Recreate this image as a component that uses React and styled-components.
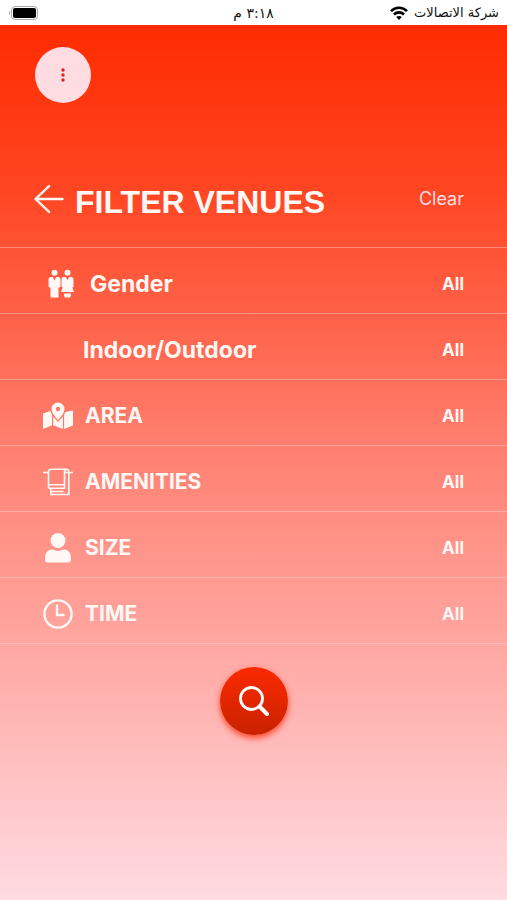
import React from "react";
import styled, { createGlobalStyle } from "styled-components";

const GlobalStyle = createGlobalStyle`
  * {
    box-sizing: border-box;
  }
  body {
    margin: 0;
    background: #ffdbe2;
  }
`

const Page = styled.div`
  min-height: 100vh;
  display: flex;
  flex-direction: column;
  font-family: Inter, "Open Sans", sans-serif;
  color: #fff8f5;
`

const StatusBar = styled.div`
  display: grid;
  grid-template-columns: 1fr auto 1fr;
  align-items: center;
  height: 25px;
  padding: 0 8px;
  background: white;
  color: #111;
  font-family: "DejaVu Sans", sans-serif;
  font-size: 13px;
  line-height: 24px;
`

const Carrier = styled.div`
  display: flex;
  align-items: center;
  gap: 6px;
`

const Time = styled.span`
  font-size: 14px;
`

const Battery = styled.svg`
  justify-self: end;
`

const Content = styled.main`
  flex: 1;
  display: flex;
  flex-direction: column;
  background: linear-gradient(#ff2b00, #ff4420 18%, #ff7f6f 48%, #ffdbe2);
`

const TopBar = styled.div`
  padding: 22px 35px 0;
`

const MenuButton = styled.button`
  display: flex;
  align-items: center;
  justify-content: center;
  width: 56px;
  height: 56px;
  padding: 0;
  border: none;
  border-radius: 50%;
  background: #ffdbe2;
  cursor: pointer;
`

const Header = styled.header`
  display: flex;
  align-items: center;
  height: 145px;
  padding: 54px 43px 0 34px;
  border-bottom: 1px solid rgba(255, 219, 226, 0.4);
`

const BackButton = styled.button`
  display: flex;
  padding: 0 0 6px;
  margin-right: 11px;
  border: none;
  background: none;
  color: inherit;
  cursor: pointer;
`

const Title = styled.h1`
  flex: 1;
  margin: 0;
  font-family: "Liberation Sans", Arial, sans-serif;
  font-size: 32px;
  font-weight: 700;
  line-height: 40px;
`

const ClearButton = styled.button`
  padding: 0 0 8px;
  border: none;
  background: none;
  color: #ffdbe2;
  font-family: inherit;
  font-size: 18px;
  cursor: pointer;
`

const FilterList = styled.ul`
  margin: 0;
  padding: 0;
  list-style: none;
`

const FilterItem = styled.li`
  border-bottom: 1px solid rgba(255, 219, 226, 0.4);
`

const FilterButton = styled.button`
  display: flex;
  align-items: center;
  width: 100%;
  height: 65px;
  padding: 7px 43px 0;
  border: none;
  background: none;
  color: inherit;
  font-family: inherit;
  font-weight: 700;
  text-align: left;
  cursor: pointer;
`

const IconSlot = styled.span`
  display: flex;
  justify-content: center;
  width: ${({ $wide }) => ($wide ? "35px" : "30px")};
`

const FilterName = styled.span`
  flex: 1;
  font-size: ${({ $large }) => ($large ? "23px" : "21px")};
  line-height: 30px;
  padding-left: ${({ $gap }) => $gap}px;
`

const FilterValue = styled.span`
  font-size: 17px;
  line-height: 30px;
`

const SearchButton = styled.button`
  display: flex;
  align-items: center;
  justify-content: center;
  align-self: center;
  width: 68px;
  height: 68px;
  margin: 23px 0 40px;
  padding: 0;
  border: none;
  border-radius: 50%;
  background: linear-gradient(#fb2a00, #c92200);
  box-shadow: 0 3px 6px rgba(255, 43, 0, 0.8);
  cursor: pointer;
`

const WifiIcon = () => (
  <svg width="18" height="14" viewBox="0 0 18 14" fill="none" stroke="#000" strokeWidth="2.600" aria-hidden="true">
    <path d="M1 5.200C5.400.6 12.600.6 17 5.200" />
    <path d="M4 8.500C6.800 5.700 11.200 5.700 14 8.500" />
    <path d="M9 14L6.200 11C7.800 9.500 10.200 9.500 11.800 11Z" fill="#000" stroke="none" />
  </svg>
)

const GenderIcon = () => (
  <svg width="26" height="30" viewBox="0 0 26 30" fill="currentColor" aria-hidden="true">
    <circle cx="6.500" cy="3.800" r="3" />
    <path d="M3 8h1.800l1.700 3.500L8.200 8H10c1.600 0 2.500 1 2.500 2.500V17c0 1-.8 1.500-2 1.500V28.500h-8V18.500C1 18.500.5 18 .5 17v-6.500C.5 9 1.400 8 3 8z" />
    <circle cx="19.500" cy="3.800" r="3" />
    <path d="M16 8h1.800l1.700 3 1.700-3H23c1.600 0 2.500 1 2.500 2.500V17c0 .8-.5 1.500-1.200 1.500L26 23H13l1.700-4.500c-.7 0-1.200-.7-1.200-1.500v-6.500C13.500 9 14.400 8 16 8z" />
    <path d="M16 24.500h7v2l-1 2h-5l-1-2z" />
  </svg>
)

const AreaIcon = () => (
  <svg width="30" height="28" viewBox="0 0 30 28" fill="currentColor" aria-hidden="true">
    <path fillRule="evenodd" d="M15 0.500a6.500 6.500 0 0 1 6.500 6.500c0 3.500-3.500 8-6.500 11-3-3-6.500-7.500-6.500-11A6.500 6.500 0 0 1 15 .5zM15 4.800a2.200 2.200 0 1 0 0 4.400 2.200 2.200 0 0 0 0-4.400z" />
    <path d="M0 11.500l7.500-2.500c.3 1.500.8 2.800 1.500 4v10.200L0 27z" />
    <path d="M10.200 14.500l4.800 5.500 4.900-5.500V27l-9.700-3.800z" />
    <path d="M21.100 12.500c.5-.8.9-1.600 1.400-2.500L30 8.500V23.500l-8.900 3.500z" />
  </svg>
)

const TowelIcon = () => (
  <svg width="30" height="28" viewBox="0 0 30 28" fill="none" stroke="currentColor" strokeWidth="1.600" aria-hidden="true">
    <path d="M0 4.500h5.500M25.500 4.500H30" />
    <path d="M5.500 20.300V4c0-1.800 1-2.700 2.500-2.700h15.300c1.600 0 2.500 1 2.500 2.700v22.500H7.800v-6" />
    <path d="M5.500 20.300h16V4c0-1.700.8-2.700 2.200-2.700M5.500 16.800h16M21.500 4.500h4M20.500 23.500H7.800" />
  </svg>
)

const PersonIcon = () => (
  <svg width="28" height="30" viewBox="0 0 28 30" fill="currentColor" aria-hidden="true">
    <circle cx="14" cy="7.500" r="7.500" />
    <path d="M1 26c0-6 2.500-9.500 7-9.500 1.500 0 3 1.500 6 1.500s4.500-1.500 6-1.500c4.500 0 7 3.500 7 9.500 0 2.500-1 3.500-3 3.500H4c-2 0-3-1-3-3.500z" />
  </svg>
)

const ClockIcon = () => (
  <svg width="30" height="30" viewBox="0 0 30 30" fill="none" stroke="currentColor" strokeWidth="2.400" aria-hidden="true">
    <circle cx="15" cy="15" r="13.600" />
    <path d="M14 6.500V16h6.500" strokeLinecap="round" strokeLinejoin="round" />
  </svg>
)

const filters = [
  { name: "Gender", value: "All", icon: <GenderIcon />, wide: true, large: true, gap: 12 },
  { name: "Indoor/Outdoor", value: "All", icon: null, large: true, gap: 10 },
  { name: "AREA", value: "All", icon: <AreaIcon />, gap: 12 },
  { name: "AMENITIES", value: "All", icon: <TowelIcon />, gap: 12 },
  { name: "SIZE", value: "All", icon: <PersonIcon />, gap: 12 },
  { name: "TIME", value: "All", icon: <ClockIcon />, gap: 12 },
]

const App = () => {
  return (
    <Page>
      <GlobalStyle />
      <StatusBar dir="rtl" lang="ar">
        <Carrier>
          <span>شركة الاتصالات</span>
          <WifiIcon />
        </Carrier>
        <Time>٣:١٨ م</Time>
        <Battery width="30" height="14" viewBox="0 0 30 14" aria-hidden="true">
          <rect x="3.500" y="0.500" width="26" height="13" rx="3.500" fill="#fff" stroke="#aaa" />
          <rect x="5" y="2" width="23" height="10" rx="2" fill="#000" />
          <path d="M2 5v4C.6 8.500.6 5.500 2 5z" fill="#999" />
        </Battery>
      </StatusBar>
      <Content>
        <TopBar>
          <MenuButton aria-label="Menu">
            <svg width="6" height="16" viewBox="0 0 6 16" fill="#e0201b" aria-hidden="true">
              <circle cx="3" cy="3" r="1.700" />
              <circle cx="3" cy="8" r="1.700" />
              <circle cx="3" cy="13" r="1.700" />
            </svg>
          </MenuButton>
        </TopBar>
        <Header>
          <BackButton aria-label="Back">
            <svg width="30" height="28" viewBox="0 0 30 28" fill="none" stroke="currentColor" strokeWidth="2.400" strokeLinecap="round" strokeLinejoin="round" aria-hidden="true">
              <path d="M28.500 14H1.500M15 1.200L1.500 14 15 26.800" />
            </svg>
          </BackButton>
          <Title>FILTER VENUES</Title>
          <ClearButton>Clear</ClearButton>
        </Header>
        <FilterList>
          {filters.map((filter) => (
            <FilterItem key={filter.name}>
              <FilterButton>
                <IconSlot $wide={filter.wide}>{filter.icon}</IconSlot>
                <FilterName $large={filter.large} $gap={filter.gap}>{filter.name}</FilterName>
                <FilterValue>{filter.value}</FilterValue>
              </FilterButton>
            </FilterItem>
          ))}
        </FilterList>
        <SearchButton aria-label="Search">
          <svg width="30" height="30" viewBox="0 0 30 30" fill="none" stroke="#fff" aria-hidden="true">
            <circle cx="12.500" cy="12.500" r="11" strokeWidth="2.800" />
            <path d="M20.500 20.500l7.500 7.500" strokeWidth="4" strokeLinecap="round" />
          </svg>
        </SearchButton>
      </Content>
    </Page>
  )
}

export default App
